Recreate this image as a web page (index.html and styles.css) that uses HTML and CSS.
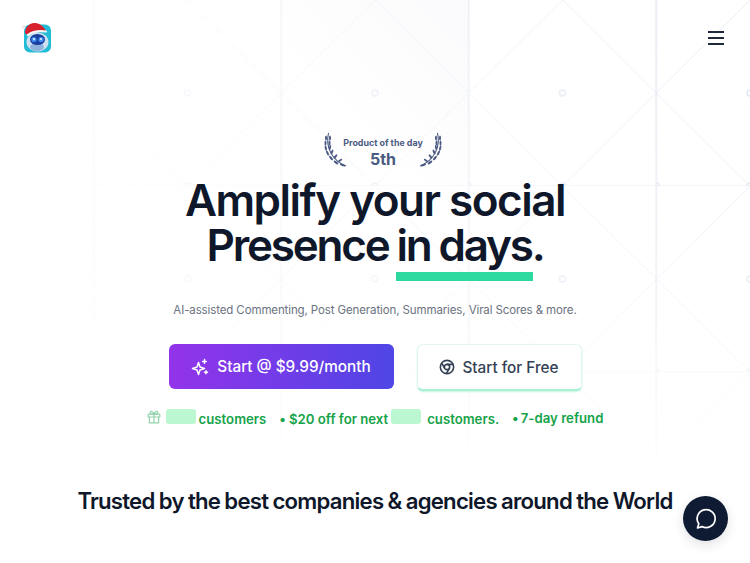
FILE: index.html
```html
<!DOCTYPE html>
<html lang="en">
<head>
<meta charset="utf-8">
<title>Amplify your social Presence in days</title>
<link rel="stylesheet" href="styles.css">
</head>
<body>
<svg class="bg" width="750" height="563" viewBox="0 0 750 563" aria-hidden="true">
  <defs>
    <pattern id="cell" x="93.75" y="0" width="187.5" height="186" patternUnits="userSpaceOnUse">
      <path d="M93.75 0 187.5 93 93.75 186 0 93Z" fill="none" stroke="#eef1f6" stroke-width="1"/>
      <path d="M0 0V186M187.5 0V186" fill="none" stroke="#e4e8ef" stroke-width="1.5"/>
      <path d="M0 186H187.5" fill="none" stroke="#e4e8ef" stroke-width="1"/>
      <circle cx="93.75" cy="93" r="3" fill="none" stroke="#dfe4f0" stroke-width="1.500"/>
      <circle cx="0" cy="186" r="3" fill="none" stroke="#dfe4f0" stroke-width="1.500"/>
      <circle cx="93.75" cy="186" r="3" fill="none" stroke="#dfe4f0" stroke-width="1.500"/>
    </pattern>
    <linearGradient id="fade" x1="0" y1="0" x2="0" y2="1">
      <stop offset="0" stop-color="#fff"/>
      <stop offset=".5" stop-color="#fff" stop-opacity=".7"/>
      <stop offset=".86" stop-color="#fff" stop-opacity="0"/>
    </linearGradient>
    <linearGradient id="side" x1="0" y1="0" x2="1" y2="0">
      <stop offset="0" stop-color="#fff" stop-opacity="0"/>
      <stop offset=".14" stop-color="#fff" stop-opacity=".18"/>
      <stop offset=".38" stop-color="#fff" stop-opacity=".45"/>
      <stop offset=".62" stop-color="#fff" stop-opacity=".6"/>
      <stop offset=".88" stop-color="#fff" stop-opacity="1"/>
    </linearGradient>
    <linearGradient id="panel" x1="1" y1="0" x2="0" y2="1">
      <stop offset="0" stop-color="#fafafc"/>
      <stop offset=".65" stop-color="#fff"/>
    </linearGradient>
    <mask id="sideMask"><rect width="750" height="563" fill="url(#side)"/></mask>
    <mask id="mask"><rect width="750" height="563" fill="url(#fade)"/></mask>
  </defs>
  <rect x="281" y="0" width="188" height="186" fill="url(#panel)"/>
  <g mask="url(#mask)"><rect width="750" height="563" fill="url(#cell)" mask="url(#sideMask)"/></g>
</svg>

<header class="top">
  <svg class="logo" width="32" height="34" viewBox="0 0 32 34" aria-label="logo">
    <rect x="3" y="3.500" width="27" height="28" rx="6" fill="#23bcd6"/>
    <ellipse cx="16.500" cy="21" rx="11" ry="9.500" fill="#cfe0f2"/>
    <ellipse cx="16" cy="26" rx="7" ry="4" fill="#8fb2dc"/>
    <ellipse cx="16.500" cy="18.500" rx="7.500" ry="5.500" fill="#1b3f9e"/>
    <circle cx="13" cy="18.500" r="2.600" fill="#3f8ef0"/>
    <circle cx="20" cy="18.500" r="2.600" fill="#3f8ef0"/>
    <circle cx="13" cy="18" r=".9" fill="#fff"/>
    <circle cx="20" cy="18" r=".9" fill="#fff"/>
    <path d="M4 12C4 6 9 1.500 14 2 19 2.200 23 6 25 10 18 9 10 10 6.500 14Z" fill="#d8202c"/>
    <path d="M7 14C11 11 18 9.500 25 10.500" fill="none" stroke="#f4f4f6" stroke-width="2.200" stroke-linecap="round"/>
    <circle cx="2.500" cy="6" r="2" fill="#f3e7e7"/>
  </svg>
  <button class="menu" aria-label="Menu"><span></span><span></span><span></span></button>
</header>

<main class="hero">
  <div class="badge">
    <svg class="laurel" width="24" height="36" viewBox="0 0 24 36" aria-hidden="true">
      <g fill="none" stroke="#4a5a82" stroke-width="1.100"><path d="M4.500 1C1.500 14 7 28 22 34"/></g>
      <g fill="#4a5a82">
        <ellipse cx="2" cy="6" rx="1" ry="2.600"/><ellipse cx="6" cy="6" rx="1" ry="2.600"/>
        <ellipse cx="1.500" cy="11" rx="1" ry="2.600"/><ellipse cx="5.500" cy="11" rx="1" ry="2.600"/>
        <ellipse cx="1.800" cy="16" rx="1" ry="2.800" transform="rotate(-12 1.800 16)"/><ellipse cx="6" cy="15.500" rx="1" ry="2.600" transform="rotate(12 6 15.500)"/>
        <ellipse cx="3.500" cy="21" rx="1" ry="2.800" transform="rotate(-25 3.500 21)"/><ellipse cx="8" cy="20" rx="1" ry="2.600" transform="rotate(25 8 20)"/>
        <ellipse cx="7" cy="26" rx="1.100" ry="2.800" transform="rotate(-40 7 26)"/><ellipse cx="11.500" cy="24.500" rx="1" ry="2.600" transform="rotate(40 11.500 24.500)"/>
        <ellipse cx="12" cy="30.500" rx="1.100" ry="2.800" transform="rotate(-55 12 30.500)"/><ellipse cx="16" cy="28.500" rx="1" ry="2.600" transform="rotate(55 16 28.500)"/>
        <ellipse cx="18.500" cy="33" rx="1.100" ry="2.800" transform="rotate(-70 18.500 33)"/>
      </g>
    </svg>
    <div class="badge-text">
      <span class="badge-label">Product of the day</span>
      <span class="badge-rank">5th</span>
    </div>
    <svg class="laurel flip" width="24" height="36" viewBox="0 0 24 36" aria-hidden="true">
      <g fill="none" stroke="#4a5a82" stroke-width="1.100"><path d="M4.500 1C1.500 14 7 28 22 34"/></g>
      <g fill="#4a5a82">
        <ellipse cx="2" cy="6" rx="1" ry="2.600"/><ellipse cx="6" cy="6" rx="1" ry="2.600"/>
        <ellipse cx="1.500" cy="11" rx="1" ry="2.600"/><ellipse cx="5.500" cy="11" rx="1" ry="2.600"/>
        <ellipse cx="1.800" cy="16" rx="1" ry="2.800" transform="rotate(-12 1.800 16)"/><ellipse cx="6" cy="15.500" rx="1" ry="2.600" transform="rotate(12 6 15.500)"/>
        <ellipse cx="3.500" cy="21" rx="1" ry="2.800" transform="rotate(-25 3.500 21)"/><ellipse cx="8" cy="20" rx="1" ry="2.600" transform="rotate(25 8 20)"/>
        <ellipse cx="7" cy="26" rx="1.100" ry="2.800" transform="rotate(-40 7 26)"/><ellipse cx="11.500" cy="24.500" rx="1" ry="2.600" transform="rotate(40 11.500 24.500)"/>
        <ellipse cx="12" cy="30.500" rx="1.100" ry="2.800" transform="rotate(-55 12 30.500)"/><ellipse cx="16" cy="28.500" rx="1" ry="2.600" transform="rotate(55 16 28.500)"/>
        <ellipse cx="18.500" cy="33" rx="1.100" ry="2.800" transform="rotate(-70 18.500 33)"/>
      </g>
    </svg>
  </div>

  <h1 class="title"><span class="line">Amplify your social</span><span class="line tight">Presence <span class="mark">in days.</span></span></h1>

  <p class="sub">AI-assisted Commenting, Post Generation, Summaries, Viral Scores &amp; more.</p>

  <div class="actions">
    <a class="btn primary" href="#">
      <svg width="18" height="18" viewBox="0 0 24 24" fill="none" stroke="#fff" stroke-width="2" stroke-linejoin="round" stroke-linecap="round" aria-hidden="true">
        <path d="M10 6 12 12 18 14 12 16 10 22 8 16 2 14 8 12Z"/>
        <path d="M18 2V7M15.500 4.500H20.500M20 17V21M18 19H22"/>
      </svg>
      Start @ $9.99/month
    </a>
    <a class="btn secondary" href="#">
      <svg width="16" height="16" viewBox="0 0 24 24" fill="none" stroke="#334155" stroke-width="2.400" aria-hidden="true">
        <circle cx="12" cy="12" r="10"/><circle cx="12" cy="12" r="4"/>
        <path d="M12 8H21M8.500 14 4 6M15.500 14 11 22"/>
      </svg>
      Start for Free
    </a>
  </div>

  <div class="perks">
    <svg class="gift" width="14" height="14" viewBox="0 0 24 24" fill="none" stroke="#8fd3a9" stroke-width="2" stroke-linejoin="round" aria-hidden="true">
      <rect x="2" y="7" width="20" height="5" rx="1"/><path d="M4 12V22H20V12M12 7V22"/>
      <path d="M12 7C10 2 6 1 5.500 4 5 6.500 9 7 12 7ZM12 7C14 2 18 1 18.500 4 19 6.500 15 7 12 7Z"/>
    </svg>
    <span class="blur"></span>
    <span class="perk first">customers</span>
    <span class="perk dot">•</span>
    <span class="perk">$20 off for next</span>
    <span class="blur second"></span>
    <span class="perk wide">customers.</span>
    <span class="perk raised dot">•</span>
    <span class="perk raised">7-day refund</span>
  </div>

  <h2 class="trusted">Trusted by the best companies &amp; agencies around the World</h2>
</main>

<button class="chat" aria-label="Chat">
  <svg width="24" height="24" viewBox="0 0 24 24" fill="none" stroke="#fff" stroke-width="1.700" stroke-linejoin="round" aria-hidden="true">
    <path d="M3.500 21 4.800 16.800A9 9 0 1 1 8 19.600Z"/>
  </svg>
</button>
</body>
</html>
```

FILE: styles.css
```css
* { box-sizing: border-box; }

html, body {
  margin: 0;
  height: 563px;
  overflow: hidden;
  background: #fff;
}

body {
  position: relative;
  font-family: Inter, "Liberation Sans", sans-serif;
  color: #0f172a;
}

.bg {
  position: absolute;
  top: 0;
  left: 0;
  z-index: 0;
}

.top,
.hero {
  position: relative;
  z-index: 1;
}

.top {
  display: flex;
  justify-content: space-between;
  align-items: center;
  height: 76px;
  padding: 0 26px 0 21px;
}

.logo { display: block; }

.menu {
  display: flex;
  flex-direction: column;
  gap: 4px;
  width: 16px;
  padding: 0;
  border: 0;
  background: none;
}

.menu span {
  display: block;
  width: 16px;
  height: 2px;
  background: #1e293b;
}

.hero {
  display: flex;
  flex-direction: column;
  align-items: center;
  padding-top: 56px;
}

.badge {
  display: flex;
  align-items: center;
  gap: 0;
  height: 36px;
  margin-left: 16px;
  color: #4a5a82;
}

.laurel { margin: 0 -6px; }

.flip { transform: scaleX(-1); }

.badge-text {
  display: flex;
  flex-direction: column;
  align-items: center;
  width: 82px;
  padding-top: 5px;
}

.badge-label {
  font-size: 8.900px;
  line-height: 12px;
  font-weight: 700;
  white-space: nowrap;
}

.badge-rank {
  margin-top: 1px;
  font-size: 16px;
  line-height: 18px;
  font-weight: 700;
}

.title {
  margin: 10px 0 0;
  font-size: 44px;
  line-height: 45px;
  font-weight: 600;
  letter-spacing: -0.034em;
  text-align: center;
  color: #0f172a;
}

.line { display: block; }

.tight {
  letter-spacing: -0.050em;
  word-spacing: -1px;
}

.mark {
  display: inline-block;
  position: relative;
}

.mark::after {
  content: "";
  position: absolute;
  left: 0;
  right: 10px;
  top: 49px;
  height: 9px;
  background: #2dd99f;
}

.sub {
  margin: 33px 0 0;
  font-size: 11.500px;
  line-height: 18px;
  letter-spacing: -0.010em;
  color: #6b7280;
}

.actions {
  display: flex;
  align-items: flex-start;
  gap: 23px;
  margin-top: 25px;
}

.btn {
  display: flex;
  justify-content: center;
  align-items: center;
  font-size: 15.300px;
  font-weight: 500;
  text-decoration: none;
  border-radius: 6px;
}

.primary {
  gap: 8px;
  width: 225px;
  height: 45px;
  color: #fff;
  background: linear-gradient(90deg, #9333ea, #4f46e5);
}

.secondary {
  gap: 7px;
  width: 165px;
  height: 47px;
  color: #334155;
  background: #fff;
  border: 1px solid #e2f5ef;
  border-bottom: 2px solid #a7f0d3;
  box-shadow: 0 1px 2px rgba(110, 231, 183, .4);
}

.perks {
  display: flex;
  align-items: center;
  margin-top: 17px;
  height: 18px;
  font-size: 13.200px;
  font-weight: 600;
  color: #16a34a;
}

.gift { margin-right: 5px; }

.blur {
  width: 30px;
  height: 15px;
  margin-top: -2px;
  border-radius: 3px;
  background: #bbf7d0;
}

.second { margin-left: 3px; }

.perk {
  margin-top: 4px;
  white-space: nowrap;
}

.first { margin-left: 3px; }

.dot { margin: 4px 3px 0 13px; }

.wide { margin-left: 6px; }

.raised { margin-top: 1px; }

.raised.dot { margin: 1px 2px 0 13px; }

.trusted {
  margin: 60px 0 0;
  font-size: 22.200px;
  line-height: 30px;
  font-weight: 600;
  letter-spacing: -0.035em;
  word-spacing: -0.600px;
  white-space: nowrap;
  color: #0f172a;
}

.chat {
  position: fixed;
  left: 683px;
  top: 496px;
  z-index: 2;
  display: flex;
  justify-content: center;
  align-items: center;
  width: 45px;
  height: 45px;
  padding: 0;
  border: 0;
  border-radius: 50%;
  background: #0f1b33;
  box-shadow: 0 4px 12px rgba(15, 23, 42, .12);
}
```
